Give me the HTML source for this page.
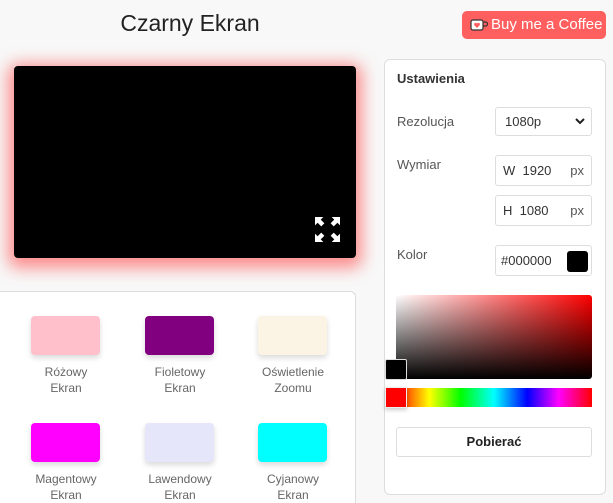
<!DOCTYPE html>
<html style="width:613px;height:503px;overflow:hidden"><head><meta charset="utf-8"><style>
*{box-sizing:border-box;margin:0;padding:0}
body{width:613px;height:503px;overflow:hidden;background:#f8f8f8;font-family:"Liberation Sans",sans-serif;color:#555;position:relative}
.a{position:absolute}
h1{position:absolute;left:0;width:380px;top:10px;text-align:center;font-weight:normal;font-size:23px;color:#222}
.btn{left:462px;top:11px;width:144px;height:28px;background:#ff5f5f;border-radius:5px;color:#fff;font-size:15px;line-height:28px;padding-left:29px}
.prev{left:14px;top:66px;width:342px;height:192px;background:#000;border-radius:4px;box-shadow:0 4px 16px 6px rgba(255,70,70,.6)}
.card{left:-6px;top:291px;width:362px;height:212px;background:#fff;border:1px solid #ddd;border-bottom:none;border-radius:6px 6px 0 0}
.sw{width:69px;height:39px;border-radius:4px;box-shadow:0 3px 6px rgba(0,0,0,.15)}
.lb{width:110px;text-align:center;font-size:12px;line-height:16px;color:#666}
.panel{left:384px;top:59px;width:222px;height:436px;background:#fff;border:1px solid #ddd;border-radius:6px}
.t{font-size:13px;color:#555}
.inp{left:495px;width:97px;background:#fff;border:1px solid #ddd;border-radius:3px;font-size:13px;color:#333}
</style></head><body>
<h1>Czarny Ekran</h1>
<div class="a btn"><svg class="a" style="left:8px;top:8px" width="18" height="12" viewBox="0 0 18 12"><rect x="1" y="1" width="12" height="10" rx="2" fill="#fff" stroke="#333" stroke-width="1.2"/><path d="M13 3h2.5a2 2 0 010 4H13" fill="none" stroke="#333" stroke-width="1.2"/><path d="M7 9L4.3 6.2a1.5 1.5 0 012.7-1.6 1.5 1.5 0 012.7 1.6z" fill="#ff5f5f"/></svg>Buy me a Coffee</div>
<div class="a prev"></div>
<svg class="a" style="left:315px;top:217px" width="25" height="25" viewBox="0 0 24 24" fill="#fff"><path d="M0 0h8l-2.5 2.5 3.5 3.5-3 3-3.5-3.5L0 8zM24 0v8l-2.5-2.5-3.5 3.5-3-3 3.5-3.5L16 0zM0 24v-8l2.5 2.5 3.5-3.5 3 3-3.5 3.5L8 24zM24 24h-8l2.5-2.5-3.5-3.5 3-3 3.5 3.5L24 16z"/></svg>
<div class="a card"></div>
<div class="a sw" style="left:31px;top:316px;background:#ffc0cb"></div>
<div class="a sw" style="left:145px;top:316px;background:#800080"></div>
<div class="a sw" style="left:258px;top:316px;background:#fbf3e3"></div>
<div class="a sw" style="left:31px;top:423px;background:#ff00ff"></div>
<div class="a sw" style="left:145px;top:423px;background:#e6e6fa"></div>
<div class="a sw" style="left:258px;top:423px;background:#00ffff"></div>
<div class="a lb" style="left:11px;top:364px">Różowy<br>Ekran</div>
<div class="a lb" style="left:125px;top:364px">Fioletowy<br>Ekran</div>
<div class="a lb" style="left:238px;top:364px">Oświetlenie<br>Zoomu</div>
<div class="a lb" style="left:11px;top:471px">Magentowy<br>Ekran</div>
<div class="a lb" style="left:125px;top:471px">Lawendowy<br>Ekran</div>
<div class="a lb" style="left:238px;top:471px">Cyjanowy<br>Ekran</div>
<div class="a panel"></div>
<div class="a" style="left:397px;top:71px;font-size:13px;font-weight:bold;color:#333">Ustawienia</div>
<div class="a t" style="left:397px;top:114px">Rezolucja</div>
<div class="a inp" style="top:107px;height:29px;line-height:27px;padding-left:9px">1080p<svg class="a" style="right:6px;top:10px" width="10" height="7" viewBox="0 0 10 7"><path d="M1 1l4 4 4-4" fill="none" stroke="#222" stroke-width="2"/></svg></div>
<div class="a t" style="left:397px;top:157px">Wymiar</div>
<div class="a inp" style="top:155px;height:31px;line-height:29px;padding-left:7px">W&nbsp; 1920<span class="a" style="right:7px;color:#555">px</span></div>
<div class="a inp" style="top:195px;height:31px;line-height:29px;padding-left:7px">H&nbsp; 1080<span class="a" style="right:7px;color:#555">px</span></div>
<div class="a t" style="left:397px;top:247px">Kolor</div>
<div class="a inp" style="top:245px;height:31px;line-height:29px;padding-left:5px">#000000<div class="a" style="left:71px;top:5px;width:21px;height:21px;background:#000;border-radius:3px"></div></div>
<div class="a" style="left:396px;top:295px;width:196px;height:84px;border-radius:3px;background:linear-gradient(to bottom,rgba(0,0,0,0),#000),linear-gradient(to right,#fff,#f00)"></div>
<div class="a" style="left:385px;top:359px;width:22px;height:21px;background:#000;border:1px solid #ddd;border-radius:2px"></div>
<div class="a" style="left:396px;top:388px;width:196px;height:19px;background:linear-gradient(to right,#f00,#ff0 17%,#0f0 33%,#0ff 50%,#00f 67%,#f0f 83%,#f00)"></div>
<div class="a" style="left:385px;top:387px;width:22px;height:21px;background:#f00;border:1px solid #eee;box-shadow:0 2px 4px rgba(0,0,0,.2)"></div>
<div class="a" style="left:396px;top:427px;width:196px;height:30px;border:1px solid #ddd;border-radius:3px;background:#fff;text-align:center;line-height:28px;font-size:13px;font-weight:bold;color:#222">Pobierać</div>
</body></html>
